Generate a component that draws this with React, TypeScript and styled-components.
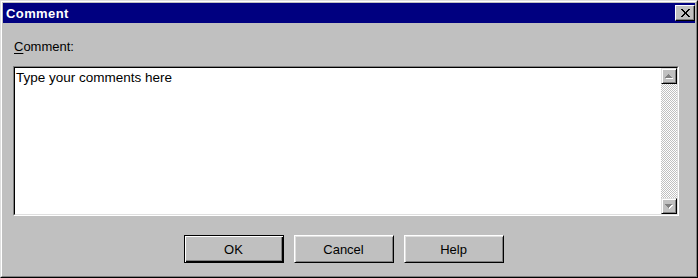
import React from "react";
import styled, { createGlobalStyle } from "styled-components";

const GlobalStyle = createGlobalStyle`
  html, body { margin: 0; padding: 0; background: #c0c0c0; }
  body { font-family: "Liberation Sans", Arial, sans-serif; }
  * { box-sizing: border-box; }
`;

const Window = styled.div`
  width: 698px;
  height: 278px;
  background: #c0c0c0;
  border: 1px solid;
  border-color: #dfdfdf #000 #000 #dfdfdf;
  display: flex;
  flex-direction: column;
`;

const WindowInner = styled.div`
  flex: 1;
  border: 1px solid;
  border-color: #fff #808080 #808080 #fff;
  padding: 1px;
  display: flex;
  flex-direction: column;
`;

const TitleBar = styled.div`
  height: 20px;
  background: #000080;
  display: flex;
  align-items: center;
  padding: 0 0 0 3px;
`;

const Title = styled.span`
  flex: 1;
  color: #fff;
  font-weight: bold;
  font-size: 13px;
  letter-spacing: 0.4px;
`;

const CloseButton = styled.div`
  width: 20px;
  height: 16px;
  background: #c0c0c0;
  border: 1px solid;
  border-color: #fff #000 #000 #fff;
  display: flex;
  align-items: center;
  justify-content: center;
  box-shadow: inset -1px -1px 0 #808080;
`;

const Body = styled.div`
  flex: 1;
  padding: 16px 16px 0 10px;
  display: flex;
  flex-direction: column;
`;

const Label = styled.div`
  font-size: 13px;
  line-height: 16px;
  color: #000;
  padding-left: 1px;
  margin-bottom: 11px;
`;

const Underline = styled.span`
  text-decoration: underline;
  text-underline-offset: 2px;
`;

const Frame = styled.div`
  height: 150px;
  border: 1px solid;
  border-color: #808080 #fff #fff #808080;
  display: flex;
`;

const FrameInner = styled.div`
  flex: 1;
  border: 1px solid;
  border-color: #000 #dfdfdf #dfdfdf #000;
  background: #fff;
  display: flex;
`;

const Editor = styled.div`
  flex: 1;
  padding: 2px 2px 2px 1px;
  font-size: 13.5px;
  line-height: 16px;
  color: #000;
`;

const Scrollbar = styled.div`
  width: 16px;
  display: flex;
  flex-direction: column;
  background: repeating-conic-gradient(#c0c0c0 0 25%, #fff 0 50%) 0 0 / 2px 2px;
`;

const Track = styled.div`
  flex: 1;
`;

const ArrowButton = styled.div`
  width: 16px;
  height: 16px;
  background: #c0c0c0;
  border: 1px solid;
  border-color: #dfdfdf #000 #000 #dfdfdf;
  box-shadow: inset 1px 1px 0 #fff, inset -1px -1px 0 #808080;
  display: flex;
  align-items: center;
  justify-content: center;
`;

const ButtonRow = styled.div`
  display: flex;
  justify-content: center;
  gap: 10px;
  margin-top: 19px;
  padding-right: 5px;
`;

const Button = styled.div<{ $default?: boolean }>`
  width: 100px;
  height: 28px;
  background: #c0c0c0;
  display: flex;
  align-items: center;
  justify-content: center;
  font-size: 13px;
  color: #000;
  border: 1px solid;
  border-color: ${(p) => (p.$default ? "#000" : "#fff #000 #000 #fff")};
  box-shadow: ${(p) =>
    p.$default
      ? "inset 1px 1px 0 #fff, inset -1px -1px 0 #000, inset -2px -2px 0 #808080"
      : "inset 1px 1px 0 #dfdfdf, inset -1px -1px 0 #808080"};
`;

const CloseGlyph = () => (
  <svg width="9" height="8" viewBox="0 0 9 8" shapeRendering="crispEdges">
    <path
      fill="#000"
      d="M0 0h2v1H0zM7 0h2v1H7zM1 1h2v1H1zM6 1h2v1H6zM2 2h2v1H2zM5 2h2v1H5zM3 3h3v2H3zM2 5h2v1H2zM5 5h2v1H5zM1 6h2v1H1zM6 6h2v1H6zM0 7h2v1H0zM7 7h2v1H7z"
    />
  </svg>
);

const ArrowGlyph = ({ down }: { down?: boolean }) => {
  const up = "M3 0h1v1H3zM2 1h3v1H2zM1 2h5v1H1zM0 3h7v1H0z";
  const dn = "M0 0h7v1H0zM1 1h5v1H1zM2 2h3v1H2zM3 3h1v1H3z";
  const d = down ? dn : up;
  return (
    <svg width="8" height="5" viewBox="0 0 8 5" shapeRendering="crispEdges">
      <path fill="#fff" d={d} transform="translate(1 1)" />
      <path fill="#808080" d={d} />
    </svg>
  );
};

export default function App() {
  return (
    <>
      <GlobalStyle />
      <Window>
        <WindowInner>
          <TitleBar>
            <Title>Comment</Title>
            <CloseButton>
              <CloseGlyph />
            </CloseButton>
          </TitleBar>
          <Body>
            <Label>
              <Underline>C</Underline>omment:
            </Label>
            <Frame>
              <FrameInner>
                <Editor>Type your comments here</Editor>
                <Scrollbar>
                  <ArrowButton>
                    <ArrowGlyph />
                  </ArrowButton>
                  <Track />
                  <ArrowButton>
                    <ArrowGlyph down />
                  </ArrowButton>
                </Scrollbar>
              </FrameInner>
            </Frame>
            <ButtonRow>
              <Button $default>OK</Button>
              <Button>Cancel</Button>
              <Button>Help</Button>
            </ButtonRow>
          </Body>
        </WindowInner>
      </Window>
    </>
  );
}
